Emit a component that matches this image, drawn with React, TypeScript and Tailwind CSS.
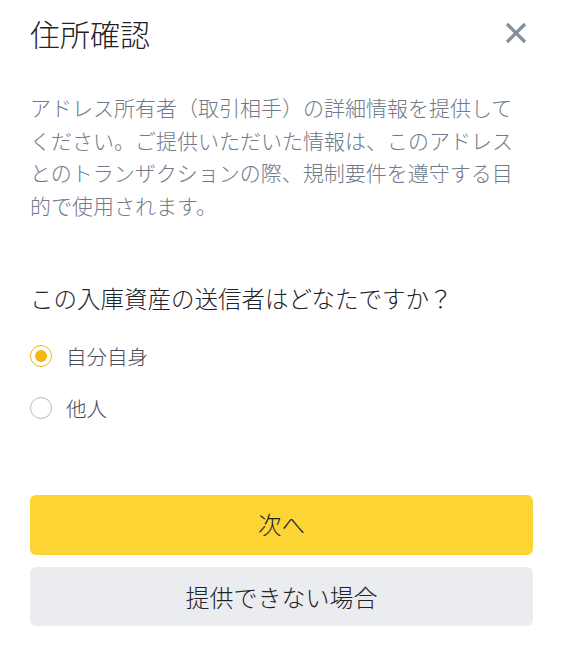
const font = {
  fontFamily: '"Noto Sans CJK JP", "Noto Sans", sans-serif',
};

function Radio({ checked, label }: { checked: boolean; label: string }) {
  return (
    <label className="flex h-[52px] items-center gap-[14px] cursor-pointer">
      <span
        className={
          checked
            ? "flex h-[22px] w-[22px] items-center justify-center rounded-full border-[1.5px] border-[#F0B90B]"
            : "flex h-[22px] w-[22px] items-center justify-center rounded-full border-[1.5px] border-[#B7BDC6]"
        }
      >
        {checked && <span className="h-[12px] w-[12px] rounded-full bg-[#F0B90B]" />}
      </span>
      <span className="text-[20.5px] leading-[28px] text-[#474D57]">{label}</span>
    </label>
  );
}

export default function App() {
  return (
    <div className="h-[656px] w-[566px] bg-white pl-[30px] pr-[33px] font-light" style={font}>
      <div className="flex h-[66px] items-center justify-between">
        <h1 className="text-[30px] leading-[36px] text-[#1E2329]">住所確認</h1>
        <button className="mr-[6px] text-[#848E9C]" aria-label="close">
          <svg width="22" height="22" viewBox="0 0 22 22" fill="none">
            <path d="M2 2L20 20M20 2L2 20" stroke="currentColor" strokeWidth="3.2" />
          </svg>
        </button>
      </div>

      <p className="mt-[25px] max-w-[488px] text-[21px] leading-[32.5px] text-[#707A8A]">
        アドレス所有者（取引相手）の詳細情報を提供してください。ご提供いただいた情報は、このアドレスとのトランザクションの際、規制要件を遵守する目的で使用されます。
      </p>

      <h2 className="mt-[61px] text-[23.5px] leading-[32px] text-[#1E2329]">
        この入庫資産の送信者はどなたですか？
      </h2>

      <div className="mt-[16px] flex flex-col">
        <Radio checked label="自分自身" />
        <Radio checked={false} label="他人" />
      </div>

      <div className="mt-[61px] flex flex-col gap-[12px]">
        <button className="h-[60px] rounded-[6px] bg-[#FCD535] text-[23.5px] text-[#1E2329]">
          次へ
        </button>
        <button className="h-[59px] rounded-[6px] bg-[#EAECEF] text-[24px] text-[#1E2329]">
          提供できない場合
        </button>
      </div>
    </div>
  );
}
